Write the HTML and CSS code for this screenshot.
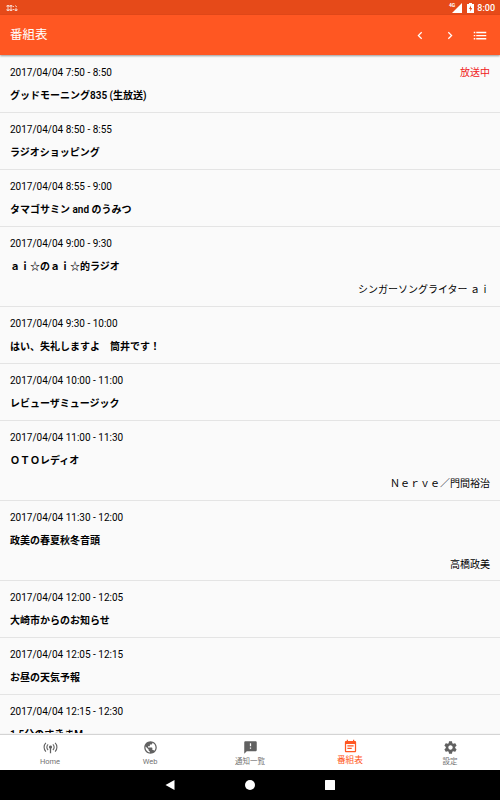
FILE: index.html
```html
<!DOCTYPE html>
<html lang="ja">
<head>
    <meta charset="UTF-8">
    <title>番組表</title>
    <link rel="stylesheet" href="styles.css">
</head>
<body>
    <div class="status-bar">
        <svg class="notification" width="12" height="8" viewBox="0 0 12 8">
            <path d="M1 1.5h2v1.5H1zM4 1.5h2v1.5H4zM1 5h2v1.5H1zM4 5h2v1.5H4zM7 2.5h1M7 5.5h1M9 1.5l2 1.5M9 5h2v1.5H9z"/>
        </svg>
        <div class="network">
            <span class="network-type">4G</span>
            <svg width="10" height="10" viewBox="0 0 10 10"><path d="M10 0v10H0z" fill="#fff"/></svg>
        </div>
        <svg class="battery" width="7" height="10" viewBox="0 0 7 10">
            <path d="M2 0h3v1h2v9H0V1h2z" fill="#fff"/>
            <path d="M4 2.5L2 6h1.3v2.5L5.2 5H4z" fill="#e64a19"/>
        </svg>
        <span class="clock">8:00</span>
    </div>
    <div class="header">
        <div class="title">番組表</div>
        <svg class="action" viewBox="0 0 24 24"><path d="M15.41 7.41L14 6l-6 6 6 6 1.41-1.41L10.83 12z"/></svg>
        <svg class="action" viewBox="0 0 24 24"><path d="M10 6L8.59 7.41 13.17 12l-4.58 4.59L10 18l6-6z"/></svg>
        <svg class="action" viewBox="0 0 24 24"><path d="M2 11h2.4v2.2H2zM2 16h2.4v2.2H2zM2 6h2.4v2.2H2zM6 11h16v2.2H6zM6 16h16v2.2H6zM6 6h16v2.2H6z"/></svg>
    </div>
    <div class="program-list">
        <div class="program">
            <div class="time">2017/04/04 7:50 - 8:50<span class="on-air">放送中</span></div>
            <div class="name">グッドモーニング835 (生放送)</div>
        </div>
        <div class="program">
            <div class="time">2017/04/04 8:50 - 8:55</div>
            <div class="name">ラジオショッピング</div>
        </div>
        <div class="program">
            <div class="time">2017/04/04 8:55 - 9:00</div>
            <div class="name">タマゴサミン and のうみつ</div>
        </div>
        <div class="program">
            <div class="time">2017/04/04 9:00 - 9:30</div>
            <div class="name">ａｉ☆のａｉ☆的ラジオ</div>
            <div class="personality">シンガーソングライター ａｉ</div>
        </div>
        <div class="program">
            <div class="time">2017/04/04 9:30 - 10:00</div>
            <div class="name">はい、失礼しますよ　筒井です！</div>
        </div>
        <div class="program">
            <div class="time">2017/04/04 10:00 - 11:00</div>
            <div class="name">レビューザミュージック</div>
        </div>
        <div class="program">
            <div class="time">2017/04/04 11:00 - 11:30</div>
            <div class="name">ＯＴＯレディオ</div>
            <div class="personality">Ｎｅｒｖｅ／門間裕治</div>
        </div>
        <div class="program">
            <div class="time">2017/04/04 11:30 - 12:00</div>
            <div class="name">政美の春夏秋冬音頭</div>
            <div class="personality">高橋政美</div>
        </div>
        <div class="program">
            <div class="time">2017/04/04 12:00 - 12:05</div>
            <div class="name">大崎市からのお知らせ</div>
        </div>
        <div class="program">
            <div class="time">2017/04/04 12:05 - 12:15</div>
            <div class="name">お昼の天気予報</div>
        </div>
        <div class="program">
            <div class="time">2017/04/04 12:15 - 12:30</div>
            <div class="name">1.5分のすきまM</div>
        </div>
    </div>
    <div class="tab-bar">
        <div class="tab">
            <svg viewBox="0 0 24 24"><path d="M12 9a2.5 2.5 0 0 0-1 4.8V21h2v-7.2A2.5 2.5 0 0 0 12 9z"/><path class="wave" d="M8.2 7a6 6 0 0 0 0 9M15.8 7a6 6 0 0 1 0 9M4.6 4.5a10 10 0 0 0 0 14M19.4 4.5a10 10 0 0 1 0 14"/></svg>
            <span>Home</span>
        </div>
        <div class="tab">
            <svg viewBox="0 0 24 24"><path d="M12 2C6.48 2 2 6.48 2 12s4.48 10 10 10 10-4.48 10-10S17.52 2 12 2zm-1 17.93c-3.95-.49-7-3.85-7-7.93 0-.62.08-1.21.21-1.79L9 15v1c0 1.1.9 2 2 2v1.93zm6.9-2.54c-.26-.81-1-1.39-1.9-1.39h-1v-3c0-.55-.45-1-1-1H8v-2h2c.55 0 1-.45 1-1V7h2c1.1 0 2-.9 2-2v-.41c2.93 1.19 5 4.06 5 7.41 0 2.08-.8 3.97-2.1 5.39z"/></svg>
            <span>Web</span>
        </div>
        <div class="tab">
            <svg viewBox="0 0 24 24"><path d="M20 2H4c-1.1 0-1.99.9-1.99 2L2 22l4-4h14c1.1 0 2-.9 2-2V4c0-1.1-.9-2-2-2zm-7 12h-2v-2h2v2zm0-4h-2V5h2v5z"/></svg>
            <span>通知一覧</span>
        </div>
        <div class="tab active">
            <svg viewBox="0 0 24 24"><path d="M17 10H7v2h10v-2zm2-7h-1V1h-2v2H8V1H6v2H5c-1.11 0-1.99.9-1.99 2L3 19c0 1.1.89 2 2 2h14c1.1 0 2-.9 2-2V5c0-1.1-.9-2-2-2zm0 16H5V8h14v11zm-5-5H7v2h7v-2z"/></svg>
            <span>番組表</span>
        </div>
        <div class="tab">
            <svg viewBox="0 0 24 24"><path d="M19.43 12.98c.04-.32.07-.64.07-.98s-.03-.66-.07-.98l2.11-1.65c.19-.15.24-.42.12-.64l-2-3.46c-.12-.22-.39-.3-.61-.22l-2.49 1c-.52-.4-1.08-.73-1.69-.98l-.38-2.65C14.46 2.18 14.25 2 14 2h-4c-.25 0-.46.18-.49.42l-.38 2.65c-.61.25-1.17.59-1.69.98l-2.49-1c-.23-.09-.49 0-.61.22l-2 3.46c-.13.22-.07.49.12.64l2.11 1.65c-.04.32-.07.65-.07.98s.03.66.07.98l-2.11 1.65c-.19.15-.24.42-.12.64l2 3.46c.12.22.39.3.61.22l2.49-1c.52.4 1.08.73 1.69.98l.38 2.65c.03.24.24.42.49.42h4c.25 0 .46-.18.49-.42l.38-2.65c.61-.25 1.17-.59 1.69-.98l2.49 1c.23.09.49 0 .61-.22l2-3.46c.12-.22.07-.49-.12-.64l-2.11-1.65zM12 15.5c-1.93 0-3.5-1.57-3.5-3.5s1.57-3.5 3.5-3.5 3.5 1.57 3.5 3.5-1.57 3.5-3.5 3.5z"/></svg>
            <span>設定</span>
        </div>
    </div>
    <div class="nav-bar">
        <svg width="10" height="10" viewBox="0 0 10 10"><path d="M9.5 0v10L.5 5z"/></svg>
        <svg width="10" height="10" viewBox="0 0 10 10"><circle cx="5" cy="5" r="5"/></svg>
        <svg width="10" height="10" viewBox="0 0 10 10"><rect width="10" height="10" rx=".5"/></svg>
    </div>
</body>
</html>
```
FILE: styles.css
```css
body {
    width: 500px;
    height: 800px;
    margin: 0;
    display: flex;
    flex-direction: column;
    overflow: hidden;
    font-family: Roboto, "Noto Sans CJK JP", sans-serif;
    font-size: 10px;
    color: #000;
    background: #fafafa;
}

.status-bar {
    display: flex;
    align-items: center;
    flex: none;
    height: 15px;
    padding: 0 5px 0 6px;
    box-sizing: border-box;
    background: #e64a19;
    color: #fff;
}

.notification {
    margin-right: auto;
    fill: none;
    stroke: #fff;
    stroke-width: 0.8;
    opacity: 0.9;
}

.network {
    display: flex;
    align-items: center;
    margin-right: 5px;
}

.network-type {
    align-self: flex-start;
    margin-right: -3px;
    font-size: 5px;
    line-height: 5px;
    font-weight: 700;
}

.battery {
    margin-right: 3px;
}

.clock {
    font-size: 9px;
    font-weight: 500;
    line-height: 15px;
    padding-top: 1px;
}

.header {
    display: flex;
    align-items: center;
    flex: none;
    height: 40px;
    padding: 0 5px 0 10px;
    box-sizing: border-box;
    background: #ff5722;
    color: #fff;
    box-shadow: 0 1px 2px rgba(0, 0, 0, 0.4);
    z-index: 1;
}

.title {
    flex-grow: 1;
    font-size: 12.5px;
    line-height: 18px;
}

.action {
    width: 15px;
    height: 15px;
    padding: 0 7.5px;
    fill: #fff;
}

.program-list {
    flex: 1;
    min-height: 0;
    margin-bottom: 2px;
    padding-top: 1.1px;
    overflow: hidden;
}

.program {
    display: flex;
    flex-direction: column;
    gap: 10px;
    padding: 10px 10px 9.07px;
    border-bottom: 1px solid #e4e4e4;
    line-height: 13.4px;
    white-space: nowrap;
}

.program > div {
    height: 13.4px;
}

.time {
    display: flex;
    justify-content: space-between;
}

.on-air {
    color: #f02020;
}

.name {
    font-weight: 600;
}

.personality {
    text-align: right;
}

.tab-bar {
    display: flex;
    flex: none;
    height: 35px;
    background: #fff;
    box-shadow: 0 -1px 1px rgba(0, 0, 0, 0.15);
    z-index: 1;
}

.tab {
    flex: 1;
    display: flex;
    flex-direction: column;
    align-items: center;
    padding-top: 5px;
    font-size: 7.5px;
    line-height: 13.5px;
    color: #737373;
}

.tab svg {
    width: 15px;
    height: 15px;
    fill: #616161;
}

.tab .wave {
    fill: none;
    stroke: #616161;
    stroke-width: 1.8;
}

.tab.active {
    padding-top: 3.5px;
    font-size: 8.75px;
    color: #ff5722;
}

.tab.active svg {
    fill: #ff5722;
}

.nav-bar {
    display: flex;
    align-items: center;
    justify-content: center;
    gap: 70px;
    flex: none;
    height: 30px;
    background: #000;
}

.nav-bar svg {
    fill: #fff;
}
```
